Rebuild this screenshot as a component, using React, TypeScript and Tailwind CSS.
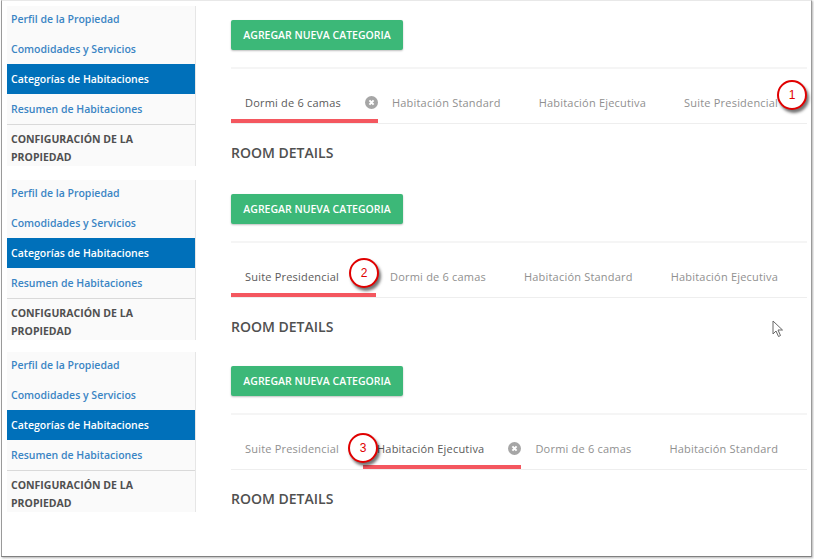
import React from "react";

const Links = ["Perfil de la Propiedad", "Comodidades y Servicios", "Categorías de Habitaciones", "Resumen de Habitaciones"];

const Sidebar = () => {
  return (
    <div className="w-[189px] h-[160px] shrink-0 overflow-hidden bg-[#fafafa] border-r border-[#e6e6e6] text-[10.5px] font-semibold">
      {Links.map((label, i) => (
        <div
          key={label}
          className={
            i === 0
              ? "flex h-[28px] items-center pl-[4px] text-[#3a85c4]"
              : i === 2
                ? "flex h-[30px] items-center pt-[2px] pl-[4px] bg-[#0070ba] text-white"
                : "flex h-[30px] items-center pt-[2px] pl-[4px] text-[#3a85c4]"
          }
        >
          {label}
        </div>
      ))}
      <div className="border-t border-[#d9d9d9] pt-[5px] pl-[4px] pr-8 font-bold leading-[18px] text-[#505050]">
        CONFIGURACIÓN DE LA PROPIEDAD
      </div>
    </div>
  );
};

const CloseIcon = () => (
  <svg viewBox="0 0 13 13" className="absolute right-0 top-[10px] h-[13px] w-[13px]">
    <circle cx="6.5" cy="6.5" r="6.5" fill="#a6a6a6" />
    <path d="M4.4 4.4l4.2 4.2M8.6 4.4l-4.2 4.2" stroke="#ffffff" strokeWidth="2" />
  </svg>
);

const Tab = ({ label, active }: { label: string; active?: boolean }) => {
  return (
    <div
      className={
        active
          ? "relative h-[37px] pl-[14px] pr-[37px] pt-[9px] border-b-[4px] border-[#f4575f] text-[#5a5a5a]"
          : "relative h-[37px] pl-[14px] pr-[24px] pt-[9px] text-[#909090]"
      }
    >
      {label}
      {active && <CloseIcon />}
    </div>
  );
};

const Callout = ({ n, className }: { n: number; className: string }) => (
  <div
    className={`absolute flex h-[30px] w-[30px] items-center justify-center rounded-full border-2 border-[#e00000] bg-white text-[12px] text-[#e00000] shadow-[2px_3px_3px_rgba(0,0,0,0.55)] ${className}`}
    style={{ fontFamily: '"Liberation Sans", sans-serif' }}
  >
    {n}
  </div>
);

const Section = ({ tabs, activeTab, className }: { tabs: string[]; activeTab: string; className?: string }) => {
  return (
    <div className={`flex ${className ?? ""}`}>
      <Sidebar />
      <div className="ml-[35px] w-[576px] pt-[14px]">
        <button className="block h-[30px] w-[172px] rounded-[2px] bg-[#3cb878] pt-[1px] text-[10.5px] font-semibold text-white shadow-[0_1px_2px_rgba(0,0,0,0.25)]">
          AGREGAR NUEVA CATEGORIA
        </button>
        <div className="mt-[17px] h-[2px] bg-[#f5f5f5]" />
        <div className="mt-[17px] flex h-[38px] border-b border-[#eeeeee] text-[11px] tracking-[0.2px]">
          {tabs.map((t) => (
            <Tab key={t} label={t} active={t === activeTab} />
          ))}
        </div>
        <h3 className="mt-[19px] text-[14px] leading-[20px] font-semibold text-[#505050]">ROOM DETAILS</h3>
      </div>
    </div>
  );
};

export default function App() {
  return (
    <div className="relative h-[560px] w-[814px] overflow-hidden bg-white" style={{ fontFamily: '"Open Sans", sans-serif' }}>
      <div className="ml-[1px] h-[557px] w-[811px] border-x border-b border-t border-x-[#9a9a9a] border-b-[#808080] border-t-[#e8e8e8] pl-[5px] pt-[5px] shadow-[1px_1px_2px_rgba(0,0,0,0.3)]">
        <Section
          tabs={["Dormi de 6 camas", "Habitación Standard", "Habitación Ejecutiva", "Suite Presidencial"]}
          activeTab="Dormi de 6 camas"
        />
        <Section
          className="mt-[14px]"
          tabs={["Suite Presidencial", "Dormi de 6 camas", "Habitación Standard", "Habitación Ejecutiva"]}
          activeTab="Suite Presidencial"
        />
        <Section
          className="mt-[12px]"
          tabs={["Suite Presidencial", "Habitación Ejecutiva", "Dormi de 6 camas", "Habitación Standard"]}
          activeTab="Habitación Ejecutiva"
        />
      </div>

      {/* Numbered callouts */}
      <Callout n={1} className="left-[777px] top-[80px]" />
      <Callout n={2} className="left-[349px] top-[258px]" />
      <Callout n={3} className="left-[348px] top-[433px]" />

      {/* Mouse cursor */}
      <svg viewBox="0 0 12 18" className="absolute left-[772px] top-[320px] h-[18px] w-[12px]">
        <path d="M1 1v13l3-3 2.500 5.500 2-1L6 10h4.500z" fill="#ffffff" stroke="#666666" strokeWidth="1" />
      </svg>
    </div>
  );
}
